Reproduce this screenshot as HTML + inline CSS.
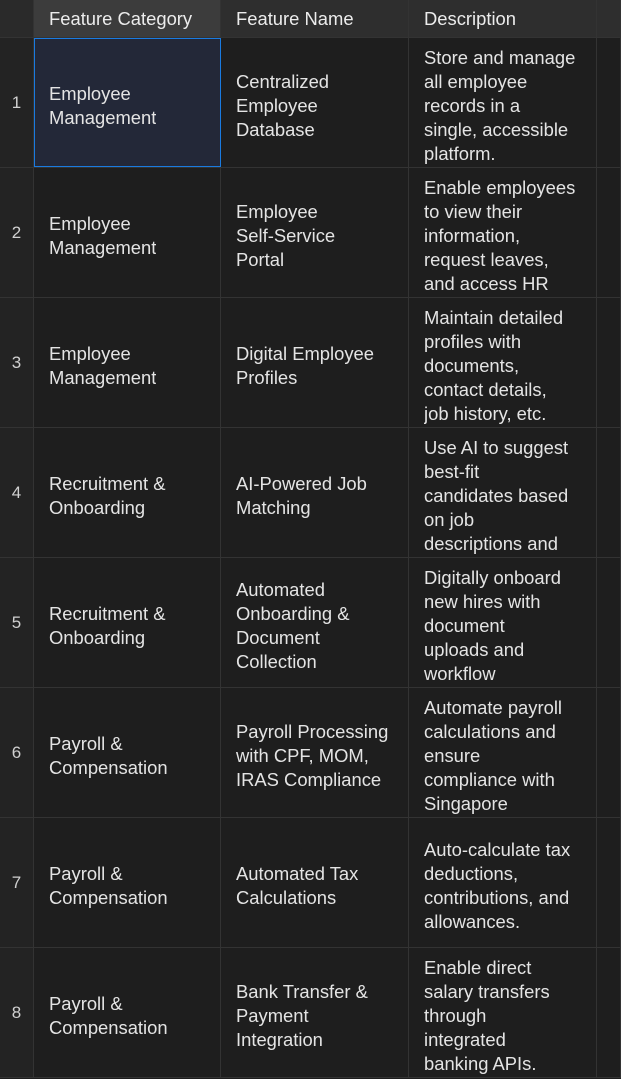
<!DOCTYPE html>
<html><head><style>
html,body{margin:0;padding:0;background:#1e1e1e;width:621px;height:1079px;overflow:hidden;font-family:"Liberation Sans",sans-serif;}
.t{position:absolute;left:0;top:0;}
.r{display:flex;height:130px;border-bottom:1px solid #333;box-sizing:border-box;}
.h{height:38px;background:#2e2e2e;}
.c{box-sizing:border-box;border-right:1px solid #333;display:flex;align-items:center;padding:0 15px;color:#e4e4e4;font-size:18.4px;line-height:24px;overflow:hidden;white-space:nowrap;}
.c>div{max-height:120px;overflow:hidden;position:relative;top:3px;}
.n{width:34px;justify-content:center;padding:0;background:#232323;color:#d0d0d0;font-size:17px;}
.w1{width:187px}.w2{width:188px}.w3{width:188px}.w4{width:24px;padding:0}
.h .c{color:#ececec;}
.h .n{background:#2a2a2a}
.sel{background:#232838;outline:1px solid #1a7be0;outline-offset:-1px;}
</style></head><body><div class="t">
<div class="r h"><div class="c n"></div><div class="c w1" style="background:#3c3c3c">Feature Category</div><div class="c w2">Feature Name</div><div class="c w3">Description</div><div class="c w4"></div></div>
<div class="r"><div class="c n">1</div><div class="c w1 sel"><div>Employee<br>Management</div></div><div class="c w2"><div>Centralized<br>Employee<br>Database</div></div><div class="c w3"><div>Store and manage<br>all employee<br>records in a<br>single, accessible<br>platform.</div></div><div class="c w4"></div></div>
<div class="r"><div class="c n">2</div><div class="c w1"><div>Employee<br>Management</div></div><div class="c w2"><div>Employee<br>Self-Service<br>Portal</div></div><div class="c w3"><div>Enable employees<br>to view their<br>information,<br>request leaves,<br>and access HR</div></div><div class="c w4"></div></div>
<div class="r"><div class="c n">3</div><div class="c w1"><div>Employee<br>Management</div></div><div class="c w2"><div>Digital Employee<br>Profiles</div></div><div class="c w3"><div>Maintain detailed<br>profiles with<br>documents,<br>contact details,<br>job history, etc.</div></div><div class="c w4"></div></div>
<div class="r"><div class="c n">4</div><div class="c w1"><div>Recruitment &amp;<br>Onboarding</div></div><div class="c w2"><div>AI-Powered Job<br>Matching</div></div><div class="c w3"><div>Use AI to suggest<br>best-fit<br>candidates based<br>on job<br>descriptions and</div></div><div class="c w4"></div></div>
<div class="r"><div class="c n">5</div><div class="c w1"><div>Recruitment &amp;<br>Onboarding</div></div><div class="c w2"><div>Automated<br>Onboarding &amp;<br>Document<br>Collection</div></div><div class="c w3"><div>Digitally onboard<br>new hires with<br>document<br>uploads and<br>workflow</div></div><div class="c w4"></div></div>
<div class="r"><div class="c n">6</div><div class="c w1"><div>Payroll &amp;<br>Compensation</div></div><div class="c w2"><div>Payroll Processing<br>with CPF, MOM,<br>IRAS Compliance</div></div><div class="c w3"><div>Automate payroll<br>calculations and<br>ensure<br>compliance with<br>Singapore</div></div><div class="c w4"></div></div>
<div class="r"><div class="c n">7</div><div class="c w1"><div>Payroll &amp;<br>Compensation</div></div><div class="c w2"><div>Automated Tax<br>Calculations</div></div><div class="c w3"><div>Auto-calculate tax<br>deductions,<br>contributions, and<br>allowances.</div></div><div class="c w4"></div></div>
<div class="r"><div class="c n">8</div><div class="c w1"><div>Payroll &amp;<br>Compensation</div></div><div class="c w2"><div>Bank Transfer &amp;<br>Payment<br>Integration</div></div><div class="c w3"><div>Enable direct<br>salary transfers<br>through<br>integrated<br>banking APIs.</div></div><div class="c w4"></div></div>
</div></body></html>
